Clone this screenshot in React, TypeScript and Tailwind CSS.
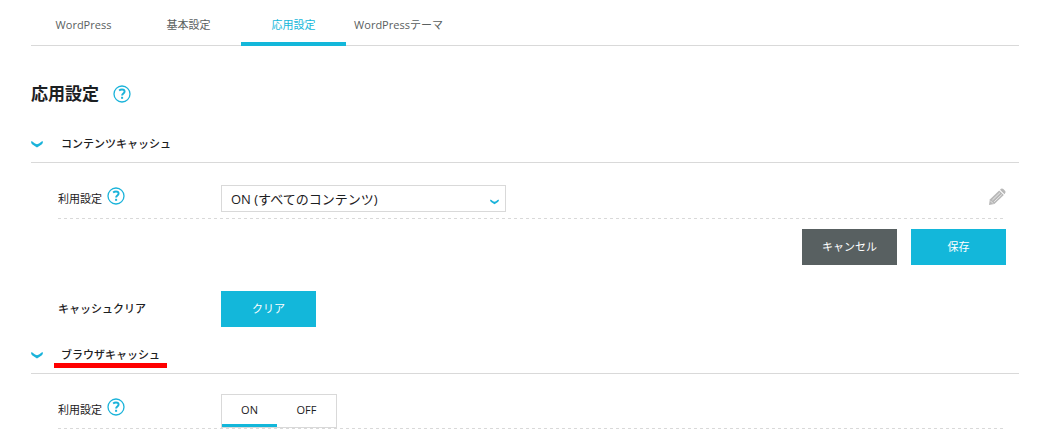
import React, { useState } from 'react'

const tabs = ['WordPress', '基本設定', '応用設定', 'WordPressテーマ']

const HelpIcon = () => (
  <svg className="block size-[18px] text-[#1ab3da]" viewBox="0 0 18 18" fill="none" stroke="currentColor">
    <circle cx="9" cy="9" r="8" strokeWidth="1.3" />
    <path d="M6.1 5.5C7 4.8 8 4.5 9 4.5c1.6 0 2.6.8 2.6 2.1 0 2-2.5 2-2.5 4" strokeWidth="1.9" />
    <path d="M9.1 11.8v2" strokeWidth="2" />
  </svg>
)

const HelpButton = ({ label }: { label: string }) => (
  <button type="button" aria-label={label} className="cursor-pointer">
    <HelpIcon />
  </button>
)

const ChevronIcon = ({ className }: { className: string }) => (
  <svg className={className} viewBox="0 0 12 7" fill="currentColor">
    <path d="M0 0.6 Q1 0 2 0.9 Q4 2.8 6 3.2 Q8 2.8 10 0.9 Q11 0 12 0.6 Q12 2.4 10.6 3.6 L6 6.6 L1.4 3.6 Q0 2.4 0 0.6 Z" />
  </svg>
)

const PencilIcon = () => (
  <svg className="block size-[18px] text-[#b8b8b8]" viewBox="0 0 18 18">
    <path d="M1 17 L1.8 11.4 L11.2 2.4 L15.8 7 L6.4 16 Z" fill="currentColor" />
    <path d="M12 1.7 L13 .8 Q14.2 0 15.3 1 L17.2 2.9 Q18 4 17.2 5.1 L16.5 6.2 Z" fill="currentColor" />
    <path d="M4.4 12 L12 4.7 M6.2 13.8 L13.8 6.5" stroke="white" strokeWidth=".7" />
    <path d="M2.4 12.8 L5.2 15.6" stroke="white" strokeWidth=".6" />
  </svg>
)

const SectionHeader = ({ title, marked = false }: { title: string; marked?: boolean }) => (
  <h2 className="border-b border-[#d9d9d9]">
    <button type="button" aria-expanded="true" className="flex h-9 w-full cursor-pointer items-center text-left font-medium">
      <ChevronIcon className="h-[7px] w-3 text-[#1ab3da]" />
      <span className="relative ml-[18px]">
        {title}
        {marked && <span className="absolute -inset-x-[7px] top-4 h-[5px] bg-[#ff0000]" />}
      </span>
    </button>
  </h2>
)

const DashedLine = () => (
  <div className="h-px bg-[repeating-linear-gradient(to_right,#d9d9d9_0_3px,transparent_3px_6px)]" />
)

const App = () => {
  const [active, setActive] = useState(2)
  const [browserCache, setBrowserCache] = useState('ON')

  return (
    <div className="bg-white pr-[21px] pl-[31px] font-['Open_Sans','Noto_Sans_CJK_JP',sans-serif] text-[11px] leading-4 text-[#1c2022]">
      <nav className="flex h-[46px] border-b border-[#d9d9d9]">
        {tabs.map((tab, i) => (
          <button
            key={tab}
            type="button"
            onClick={() => setActive(i)}
            className={`-mb-px w-[105px] cursor-pointer border-b-4 pt-2 whitespace-nowrap ${
              i === active ? 'border-[#13b7da] text-[#13b7da]' : 'border-transparent text-[#5a6060]'
            }`}
          >
            {tab}
          </button>
        ))}
      </nav>

      <main>
        <div className="flex items-center gap-[14px] pt-9 pb-5">
          <h1 className="text-[17px] leading-6 font-bold">応用設定</h1>
          <HelpButton label="応用設定のヘルプ" />
        </div>

        <SectionHeader title="コンテンツキャッシュ" />
        <div className="pr-[13px] pl-[27px]">
          <div className="flex h-[55px] items-center pt-4">
            <div className="flex w-[163px] items-start gap-[5px] pb-1">
              <label htmlFor="content-cache" className="pt-1">利用設定</label>
              <HelpButton label="利用設定のヘルプ" />
            </div>
            <div className="relative">
              <select
                id="content-cache"
                className="block h-[27px] w-[285px] appearance-none border border-[#d9d9d9] bg-white px-[9px] text-[13px]"
              >
                <option>ON (すべてのコンテンツ)</option>
                <option>OFF</option>
              </select>
              <ChevronIcon className="pointer-events-none absolute top-[14px] right-[7px] h-[6px] w-[9px] text-[#1ab3da]" />
            </div>
            <button type="button" aria-label="編集" className="mb-1 ml-auto cursor-pointer">
              <PencilIcon />
            </button>
          </div>
          <DashedLine />
          <div className="flex justify-end gap-[14px] pt-[10px]">
            <button type="button" className="h-9 w-[95px] cursor-pointer bg-[#586061] text-white">キャンセル</button>
            <button type="button" className="h-9 w-[95px] cursor-pointer bg-[#13b7da] text-white">保存</button>
          </div>
          <div className="flex items-center pt-[26px] pb-[10px]">
            <div className="w-[163px] font-medium">キャッシュクリア</div>
            <button type="button" className="h-9 w-[95px] cursor-pointer bg-[#13b7da] text-white">クリア</button>
          </div>
        </div>

        <SectionHeader title="ブラウザキャッシュ" marked />
        <div className="pr-[13px] pl-[27px]">
          <div className="flex items-start pt-5">
            <div className="flex w-[163px] items-start gap-[5px] pt-1">
              <span className="pt-1">利用設定</span>
              <HelpButton label="利用設定のヘルプ" />
            </div>
            <div className="flex h-[34px] border border-[#d9d9d9] bg-white">
              {['ON', 'OFF'].map((value) => (
                <button
                  key={value}
                  type="button"
                  aria-pressed={browserCache === value}
                  onClick={() => setBrowserCache(value)}
                  className={`cursor-pointer border-b-3 ${
                    value === 'ON' ? 'w-[55px]' : 'w-[59px]'
                  } ${browserCache === value ? 'border-[#13b7da]' : 'border-transparent'}`}
                >
                  {value}
                </button>
              ))}
            </div>
          </div>
          <DashedLine />
        </div>
      </main>
    </div>
  )
}

export default App
